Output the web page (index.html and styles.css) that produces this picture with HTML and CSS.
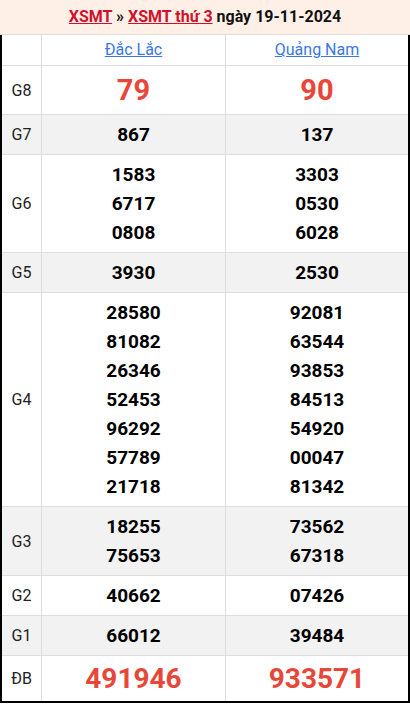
FILE: index.html
```html
<!DOCTYPE html>
<html lang="vi">
<head>
<meta charset="utf-8">
<title>XSMT thứ 3 ngày 19-11-2024</title>
<link rel="stylesheet" href="styles.css">
</head>
<body>
<div class="title">
  <a href="#" class="tlink">XSMT</a> » <a href="#" class="tlink">XSMT thứ 3</a> ngày 19-11-2024
</div>
<div class="board">
  <div class="row head">
    <div class="lbl"></div>
    <div class="cell"><a href="#" class="prov">Đắc Lắc</a></div>
    <div class="cell"><a href="#" class="prov">Quảng Nam</a></div>
  </div>
  <div class="row big">
    <div class="lbl">G8</div>
    <div class="cell red">79</div>
    <div class="cell red">90</div>
  </div>
  <div class="row alt">
    <div class="lbl">G7</div>
    <div class="cell num">867</div>
    <div class="cell num">137</div>
  </div>
  <div class="row">
    <div class="lbl">G6</div>
    <div class="cell num">1583<br>6717<br>0808</div>
    <div class="cell num">3303<br>0530<br>6028</div>
  </div>
  <div class="row alt">
    <div class="lbl">G5</div>
    <div class="cell num">3930</div>
    <div class="cell num">2530</div>
  </div>
  <div class="row">
    <div class="lbl">G4</div>
    <div class="cell num">28580<br>81082<br>26346<br>52453<br>96292<br>57789<br>21718</div>
    <div class="cell num">92081<br>63544<br>93853<br>84513<br>54920<br>00047<br>81342</div>
  </div>
  <div class="row alt">
    <div class="lbl">G3</div>
    <div class="cell num">18255<br>75653</div>
    <div class="cell num">73562<br>67318</div>
  </div>
  <div class="row">
    <div class="lbl">G2</div>
    <div class="cell num">40662</div>
    <div class="cell num">07426</div>
  </div>
  <div class="row alt">
    <div class="lbl">G1</div>
    <div class="cell num">66012</div>
    <div class="cell num">39484</div>
  </div>
  <div class="row big last">
    <div class="lbl">ĐB</div>
    <div class="cell red db">491946</div>
    <div class="cell red db">933571</div>
  </div>
</div>
</body>
</html>
```

FILE: styles.css
```css
* { box-sizing: border-box; }
html, body {
  margin: 0;
  padding: 0;
  background: #fff;
  font-family: Roboto, "Liberation Sans", Arial, sans-serif;
  color: #111;
}
.title {
  height: 35px;
  background: #fef0e6;
  border-bottom: 1px solid #dddddd;
  text-align: center;
  font-size: 16px;
  font-weight: 700;
  line-height: 34px;
  color: #111;
}
.tlink {
  color: #d0102c;
  text-decoration: underline;
}
.board {
  width: 410px;
  border-left: 2px solid #000;
  border-right: 2px solid #000;
  border-bottom: 2px solid #000;
}
.row {
  display: grid;
  grid-template-columns: 40px 184px 1fr;
  border-bottom: 1px solid #dddddd;
}
.row.last { border-bottom: 0; }
.row.alt { background: #f2f2f2; }
.lbl {
  border-right: 1px solid #dddddd;
  display: flex;
  align-items: center;
  justify-content: center;
  font-size: 16px;
  color: #222;
}
.cell {
  border-right: 1px solid #dddddd;
  text-align: center;
  padding: 5px 0;
}
.cell:last-child { border-right: 0; }
.head .cell {
  line-height: 20px;
  font-size: 16px;
}
.prov {
  color: #3a78e3;
  text-decoration: underline;
}
.num {
  font-size: 19px;
  font-weight: 700;
  line-height: 29px;
  color: #000;
}
.red {
  font-size: 29px;
  font-weight: 700;
  line-height: 38px;
  color: #e9463a;
}
.red.db {
  font-size: 28px;
  line-height: 35px;
}
```
